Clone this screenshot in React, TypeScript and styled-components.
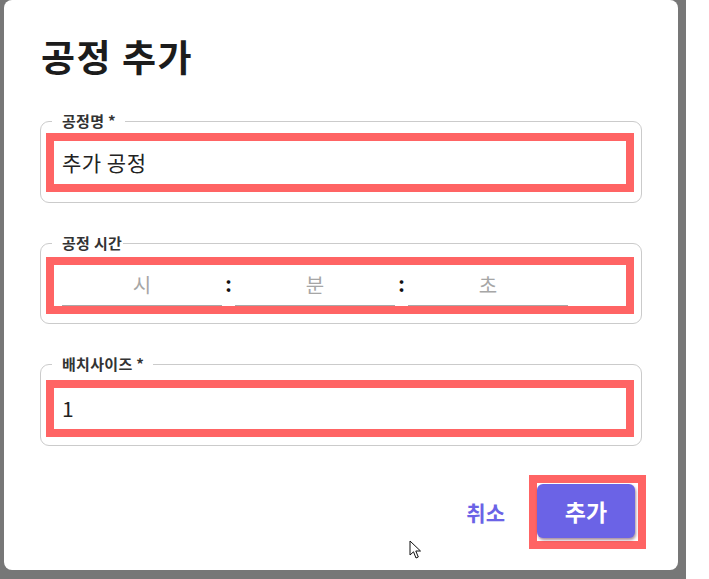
import React, { useState } from "react";
import styled, { createGlobalStyle } from "styled-components";

const FONT = `"Noto Sans CJK KR", "Noto Sans", "Liberation Sans", sans-serif`;
const RED = "#ff6464";
const PURPLE = "#6b63e6";

const GlobalStyle = createGlobalStyle`
	html, body {
		margin: 0;
		background: #fff;
		font-family: ${FONT};
	}
	* {
		box-sizing: border-box;
	}
`;

const Screen = styled.div`
	width: 709px;
	height: 579px;
	display: flex;
	overflow: hidden;
`;

const Backdrop = styled.div`
	width: 686px;
	height: 579px;
	background: #777;
	padding: 0 8px 9px 4px;
	display: flex;
`;

const Dialog = styled.div`
	position: relative;
	flex: 1;
	background: #fff;
	border-radius: 8px;
	padding: 36px 36px 0 36px;
	display: flex;
	flex-direction: column;
`;

const Title = styled.h2`
	margin: 0 0 37px 1px;
	font-size: 37px;
	line-height: 40px;
	letter-spacing: 1.5px;
	font-weight: 700;
	color: #1c1c1c;
`;

const Form = styled.div`
	display: flex;
	flex-direction: column;
	gap: 32px;
`;

const Field = styled.fieldset<{ $padTop: number; $padBottom: number }>`
	margin: 0;
	min-width: 0;
	padding: ${(p) => p.$padTop}px 7px ${(p) => p.$padBottom}px 5px;
	border: 1px solid #cbcbcb;
	border-radius: 9px;
`;

const Legend = styled.legend<{ $tight?: boolean }>`
	margin-left: 6px;
	padding: 0 ${(p) => (p.$tight ? 1 : 9)}px 0 10px;
	font-size: 15px;
	line-height: 16px;
	letter-spacing: 0.3px;
	font-weight: 700;
	color: #333;
`;

// red annotation frame drawn round the highlighted controls
const Highlight = styled.div<{ $height: number }>`
	height: ${(p) => p.$height}px;
	border: 8px solid ${RED};
	background: #fff;
	display: flex;
`;

const TextInput = styled.input`
	flex: 1;
	min-width: 0;
	border: none;
	outline: none;
	background: transparent;
	padding: 0 0 2px 8px;
	font-family: ${FONT};
	font-size: 21px;
	letter-spacing: 0.5px;
	color: #222;
`;

const TimeRow = styled.div`
	flex: 1;
	display: flex;
	align-items: stretch;
	padding-left: 8px;
`;

const TimeInput = styled.input`
	width: 160px;
	border: none;
	border-bottom: 1px solid #a8a8a8;
	outline: none;
	background: transparent;
	padding: 0 0 2px;
	text-align: center;
	font-family: ${FONT};
	font-size: 20px;
	color: #222;

	&::placeholder {
		color: #a6a6a6;
	}
`;

const Colon = styled.span`
	width: 13px;
	display: flex;
	align-items: center;
	justify-content: center;
	font-size: 20px;
	font-weight: 700;
	color: #111;
	padding-bottom: 4px;
`;

const Actions = styled.div`
	margin: 29px -4px 0 0;
	display: flex;
	justify-content: flex-end;
	align-items: center;
	gap: 20px;
`;

const CancelButton = styled.button`
	border: none;
	background: transparent;
	padding: 6px 4px;
	font-family: ${FONT};
	font-size: 21px;
	font-weight: 700;
	color: ${PURPLE};
	cursor: pointer;
`;

const ButtonFrame = styled.div`
	border: 8px solid ${RED};
	background: #fff;
	padding: 1px 3px 3px 0;
	display: flex;
`;

const PrimaryButton = styled.button`
	width: 98px;
	height: 54px;
	border: none;
	border-radius: 6px;
	background: ${PURPLE};
	box-shadow: 1px 2px 3px rgba(60, 0, 40, 0.45);
	font-family: ${FONT};
	font-size: 23px;
	font-weight: 700;
	color: #fff;
	cursor: pointer;
`;

const Pointer = styled.svg`
	position: absolute;
	left: 405px;
	top: 540px;
`;

export default function App() {
	let [name, setName] = useState("추가 공정");
	let [batch, setBatch] = useState("1");
	let [time, setTime] = useState({ h: "", m: "", s: "" });

	return (
		<Screen>
			<GlobalStyle />
			<Backdrop>
				<Dialog>
					<Title>공정 추가</Title>
					<Form>
						<Field $padTop={4} $padBottom={10}>
							<Legend>공정명 *</Legend>
							<Highlight $height={59}>
								<TextInput value={name} onChange={(e) => setName(e.target.value)} />
							</Highlight>
						</Field>
						<Field $padTop={6} $padBottom={9}>
							<Legend $tight>공정 시간</Legend>
							<Highlight $height={57}>
								<TimeRow>
									<TimeInput
										placeholder="시"
										value={time.h}
										onChange={(e) => setTime({ ...time, h: e.target.value })}
									/>
									<Colon>:</Colon>
									<TimeInput
										placeholder="분"
										value={time.m}
										onChange={(e) => setTime({ ...time, m: e.target.value })}
									/>
									<Colon>:</Colon>
									<TimeInput
										placeholder="초"
										value={time.s}
										onChange={(e) => setTime({ ...time, s: e.target.value })}
									/>
								</TimeRow>
							</Highlight>
						</Field>
						<Field $padTop={8} $padBottom={8}>
							<Legend>배치사이즈 *</Legend>
							<Highlight $height={57}>
								<TextInput value={batch} onChange={(e) => setBatch(e.target.value)} />
							</Highlight>
						</Field>
					</Form>
					<Actions>
						<CancelButton>취소</CancelButton>
						<ButtonFrame>
							<PrimaryButton>추가</PrimaryButton>
						</ButtonFrame>
					</Actions>
					<Pointer width="13" height="20" viewBox="0 0 13 20">
						<path
							d="M1 1 L1 15 L4.5 11.8 L7 18 L9.3 17 L6.8 11 L11.5 11 Z"
							fill="#fff"
							stroke="#111"
							strokeWidth="1"
							strokeLinejoin="round"
						/>
					</Pointer>
				</Dialog>
			</Backdrop>
		</Screen>
	);
}
